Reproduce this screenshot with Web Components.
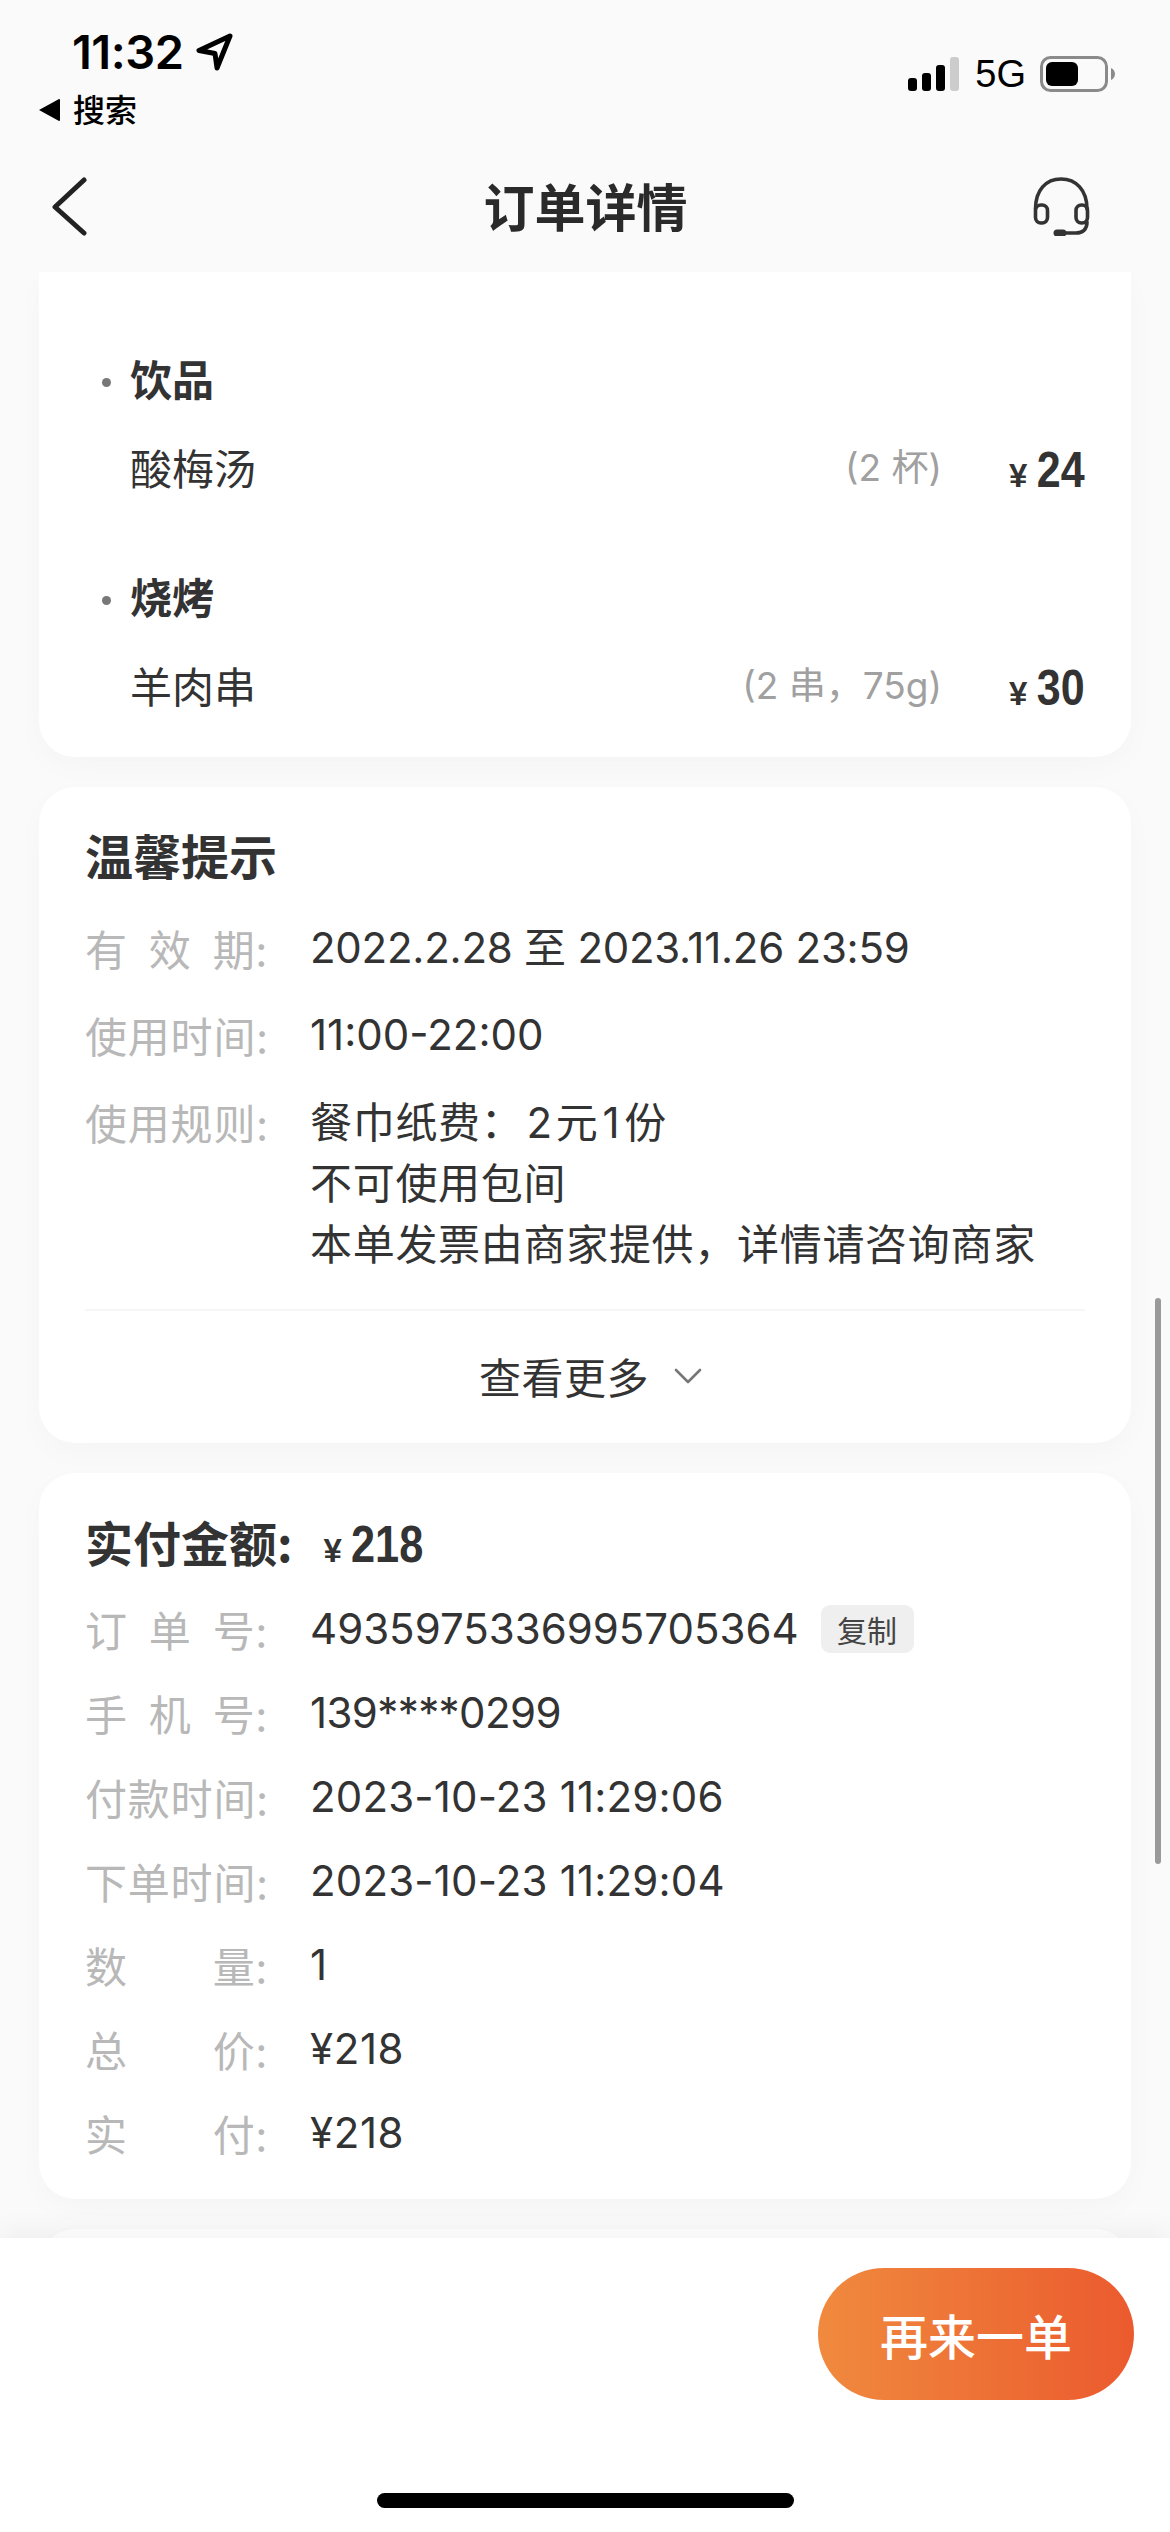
<!DOCTYPE html>
<html lang="zh">
<head>
<meta charset="utf-8">
<title>订单详情</title>
<style>
html,body{margin:0;padding:0;background:#fafafa}
body{width:1170px;height:2532px;overflow:hidden;font-family:Inter,"Noto Sans CJK SC",sans-serif;color:#333}
</style>
</head>
<body>
<order-page>
  <status-bar slot="top"></status-bar>
  <nav-bar slot="top" title="订单详情"></nav-bar>

  <info-card flat pad="79px 0 41px">
    <item-group name="饮品">
      <order-item name="酸梅汤" qty="(2 杯)" price="24"></order-item>
    </item-group>
    <item-group name="烧烤" style="margin-top:71px">
      <order-item name="羊肉串" qty="(2 串，75g)" price="30"></order-item>
    </item-group>
  </info-card>

  <info-card pad="37px 46px 0">
    <card-title>温馨提示</card-title>
    <kv-list gap="27px" style="margin-top:28px">
      <kv-row label="有 效 期:" style="letter-spacing:-.25px">2022.2.28 至 2023.11.26 23:59</kv-row>
      <kv-row label="使用时间:">11:00-22:00</kv-row>
      <kv-row label="使用规则:" style="letter-spacing:.7px;line-height:61px">餐巾纸费：<span style="margin:0 3px">2</span>元<span style="margin:0 4px">1</span>份<br>不可使用包间<br>本单发票由商家提供，详情请咨询商家</kv-row>
    </kv-list>
    <more-row>查看更多</more-row>
  </info-card>

  <info-card pad="38px 46px 36px">
    <card-title><pay-total>实付金额:</pay-total></card-title>
    <kv-list gap="24px" style="margin-top:22px">
      <kv-row label="订 单 号:">4935975336995705364<copy-tag>复制</copy-tag></kv-row>
      <kv-row label="手 机 号:" style="letter-spacing:-.6px">139****0299</kv-row>
      <kv-row label="付款时间:" style="letter-spacing:.17px">2023-10-23 11:29:06</kv-row>
      <kv-row label="下单时间:" style="letter-spacing:.17px">2023-10-23 11:29:04</kv-row>
      <kv-row label="数 量:">1</kv-row>
      <kv-row label="总 价:" style="letter-spacing:.6px">¥218</kv-row>
      <kv-row label="实 付:" style="letter-spacing:.6px">¥218</kv-row>
    </kv-list>
  </info-card>

  <info-card pad="60px 46px"></info-card>

  <action-footer slot="bottom">再来一单</action-footer>
</order-page>

<script>
const NUM = '"Liberation Sans",sans-serif';
function el(name, html){
  customElements.define(name, class extends HTMLElement{
    constructor(){
      super();
      this.attachShadow({mode:'open'});
    }
    connectedCallback(){
      if(this.shadowRoot.innerHTML) return;
      this.shadowRoot.innerHTML = typeof html==='function' ? html(this) : html;
    }
  });
}

el('order-page', `<style>
:host{display:flex;flex-direction:column;width:1170px;height:2532px;position:relative;overflow:hidden;background:#fafafa}
.top{flex:none}
.scroll{flex:1;min-height:0;overflow:hidden;padding:0 39px;display:flex;flex-direction:column;gap:30px}
.bottom{flex:none;z-index:2;display:block}
.bar{position:absolute;left:1155px;top:1298px;width:6px;height:566px;border-radius:3px;background:#9a9a9a}
</style>
<div class="top"><slot name="top"></slot></div>
<div class="scroll"><slot></slot></div>
<div class="bottom"><slot name="bottom"></slot></div>
<div class="bar"></div>`);

el('status-bar', `<style>
:host{display:flex;justify-content:space-between;height:140px;box-sizing:border-box;color:#000}
.left{display:flex;flex-direction:column;padding:20px 0 0 39px}
.time{display:flex;align-items:center;height:64px;padding-left:33px;font:600 47px/64px Inter,sans-serif;letter-spacing:-.5px}
.time svg{margin-left:13px}
.back{display:flex;align-items:center;height:40px;margin-top:4px;font:500 32px/40px "Noto Sans CJK SC",sans-serif;color:#000}
.back svg{margin-right:13px;margin-top:3px}
.right{position:relative;display:flex;align-items:flex-end;height:91px;padding-right:55px}
.bars{display:flex;align-items:flex-end;gap:5px;margin-right:16px}
.bars i{display:block;width:9px;border-radius:3px;background:#000}
.g{font:400 38px/34px "Liberation Sans",sans-serif;margin-right:14px;height:34px}
</style>
<div class="left">
  <div class="time">11:32<svg width="38" height="38" viewBox="0 0 38 38"><path d="M34 3 3 17.500 19 20.500 21 35Z" fill="none" stroke="#000" stroke-width="5" stroke-linejoin="round"/></svg></div>
  <div class="back"><svg width="21" height="22" viewBox="0 0 21 22"><path d="M0 11 20 0a1 1 0 0 1 1 1v20a1 1 0 0 1-1 1Z" fill="#000"/></svg>搜索</div>
</div>
<div class="right">
  <div class="bars"><i style="height:13px"></i><i style="height:18px"></i><i style="height:26px"></i><i style="height:34px;background:#ccc"></i></div>
  <div class="g">5G</div>
  <svg width="75" height="36" viewBox="0 0 75 36" style="margin-bottom:-1px"><rect x="1.500" y="1.500" width="65" height="33" rx="9" fill="none" stroke="#8a8a8a" stroke-width="3"/><rect x="6" y="6" width="32" height="24" rx="6" fill="#000"/><path d="M71 12c2.500 1 4 3.500 4 6s-1.500 5-4 6Z" fill="#8a8a8a"/></svg>
</div>`);

el('nav-bar', t=>`<style>
:host{display:flex;align-items:center;justify-content:space-between;height:132px;padding:0 78px 0 50px;box-sizing:border-box;width:1170px;position:relative}
.t{flex:1;text-align:center;font:700 51px/66px "Noto Sans CJK SC",sans-serif;color:#2a2a2a;padding-left:49px;padding-bottom:3px}
svg{display:block;flex:none}
</style>
<svg width="40" height="60" viewBox="0 0 40 60"><path d="M34 4 5 31 34 57" fill="none" stroke="#222" stroke-width="5" stroke-linecap="round" stroke-linejoin="round"/></svg>
<div class="t">${t.getAttribute('title')}</div>
<svg width="60" height="60" viewBox="0 0 60 60"><g fill="none" stroke="#333" stroke-width="3.600" stroke-linecap="round"><path d="M3.500 33C3.500 14 14 3 29 3s26 11 26 30"/><rect x="3.500" y="29" width="12" height="18" rx="5.500"/><rect x="44" y="29" width="11.500" height="18" rx="5.500"/><path d="M55 46c0 7-4 11-11 11H30"/></g><path d="M25 57h6" stroke="#333" stroke-width="7" stroke-linecap="round"/></svg>`);

el('info-card', t=>`<style>
:host{display:block;flex:none;background:#fff;border-radius:${t.hasAttribute('flat')?'0 0 36px 36px':'36px'};box-shadow:0 10px 30px rgba(0,0,0,.025);padding:${t.getAttribute('pad')};box-sizing:border-box}
</style><slot></slot>`);

el('item-group', t=>`<style>
:host{display:block;padding:0 46px 0 63px}
.h{position:relative;height:60px;font:700 42px/54px "Noto Sans CJK SC",sans-serif;color:#333;padding-left:28px}
.h i{display:block;position:absolute;left:0;top:27px;width:9px;height:9px;border-radius:50%;background:#777}
</style><div class="h"><i></i>${t.getAttribute('name')}</div><slot></slot>`);

el('order-item', t=>`<style>
:host{display:flex;align-items:flex-start;height:60px;margin-top:27px;padding-left:28px}
.n{flex:1;font:400 42px/57px "Noto Sans CJK SC",sans-serif;color:#333}
.q{font:400 37px/60px Inter,"Noto Sans CJK SC",sans-serif;color:#a0a0a0}
.p{width:143px;flex:none;display:flex;justify-content:flex-end;align-items:baseline;font:700 50px/64px ${NUM};color:#333;white-space:nowrap}
.p small{font-size:33px;margin-right:2px}
.p b{display:inline-block;transform:scaleX(.86);transform-origin:100% 50%;margin-left:0}
</style><div class="n">${t.getAttribute('name')}</div><div class="q">${t.getAttribute('qty')}</div><div class="p"><small>¥</small><b>${t.getAttribute('price')}</b></div>`);

el('card-title', `<style>
:host{display:block;height:66px;font:700 48px/60px "Noto Sans CJK SC",sans-serif;color:#333;white-space:nowrap}
</style><slot></slot>`);

el('pay-total', `<style>
:host{display:inline-flex;align-items:baseline}
.p{font:700 51px/60px ${NUM};margin-left:31px}
small{font-size:33px;margin-right:9px}
b{display:inline-block;transform:scaleX(.85);transform-origin:0 50%}
</style><slot></slot><span class="p"><small>¥</small><b>218</b></span>`);

el('kv-list', t=>`<style>
:host{display:flex;flex-direction:column;gap:${t.getAttribute('gap')}}
</style><slot></slot>`);

el('kv-row', t=>{
  const parts = t.getAttribute('label').split(' ');
  return `<style>
:host{display:flex;font:400 42px/60px Inter,"Noto Sans CJK SC",sans-serif;color:#333}
.l{flex:none;width:183px;margin-right:42px;display:flex;justify-content:space-between;color:#b8b8b8;font-family:"Noto Sans CJK SC",sans-serif;white-space:nowrap;letter-spacing:.8px;line-height:60px}
.c{display:block;white-space:nowrap}
</style><div class="l">${parts.map(p=>`<span>${p}</span>`).join('')}</div><div class="c"><slot></slot></div>`;
});

el('copy-tag', `<style>
:host{display:inline-block;vertical-align:top;width:93px;height:48px;margin:6px 0 0 22px;border-radius:9px;background:#efefef;font:400 30px/48px "Noto Sans CJK SC",sans-serif;color:#444;text-align:center}
</style><slot></slot>`);

el('more-row', `<style>
:host{display:flex;align-items:center;justify-content:center;height:129px;padding-bottom:3px;margin-top:34px;padding-left:11px;border-top:2px solid #f6f6f6;font:400 42px/60px "Noto Sans CJK SC",sans-serif;color:#333;letter-spacing:.5px}
svg{margin-left:25px}
</style><slot></slot><svg width="28" height="16" viewBox="0 0 28 16"><path d="M2 2 14 14 26 2" fill="none" stroke="#777" stroke-width="2.600" stroke-linecap="round" stroke-linejoin="round"/></svg>`);

el('action-footer', `<style>
:host{display:flex;flex-direction:column;height:294px;box-sizing:border-box;padding-top:30px;background:#fff;box-shadow:0 -6px 26px rgba(0,0,0,.05)}
.b{align-self:flex-end;margin-right:36px;width:316px;height:132px;border-radius:66px;display:flex;align-items:center;justify-content:center;background:linear-gradient(90deg,#f08a3e,#eb5a2e);color:#fff;font:500 48px/60px "Noto Sans CJK SC",sans-serif}
.h{align-self:center;width:417px;height:15px;margin-top:93px;border-radius:8px;background:#000}
</style><div class="b"><slot></slot></div><div class="h"></div>`);
</script>
</body>
</html>
